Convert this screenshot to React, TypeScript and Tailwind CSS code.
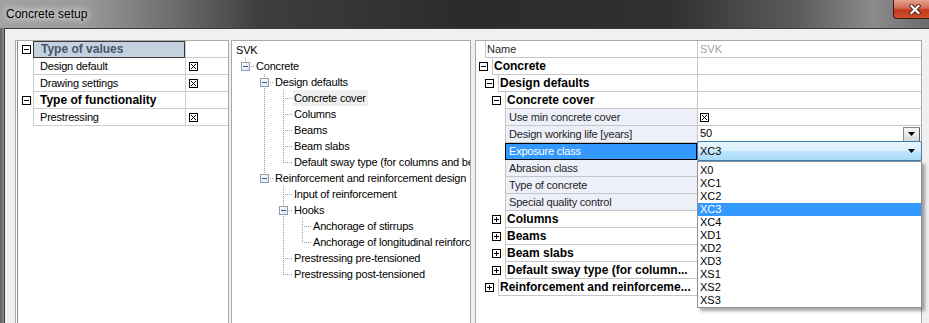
import type { ReactNode } from "react";

// small ⊠ glyph used in value columns
function Check() {
  const px = [2, 3, 4, 5, 6];
  return (
    <svg width="9" height="9" viewBox="0 0 9 9" shapeRendering="crispEdges" className="shrink-0">
      <rect x="0.5" y="0.5" width="8" height="8" fill="#fff" stroke="#000" />
      {px.map((i) => (
        <rect key={"a" + i} x={i} y={i} width="1" height="1" fill="#000" />
      ))}
      {px.map((i) => (
        <rect key={"b" + i} x={8 - i} y={i} width="1" height="1" fill="#000" />
      ))}
    </svg>
  );
}

function GridToggle({ open }: { open: boolean }) {
  return (
    <svg width="9" height="9" viewBox="0 0 9 9" shapeRendering="crispEdges" className="shrink-0">
      <rect x="0.5" y="0.5" width="8" height="8" fill="#fff" stroke="#000" />
      <rect x="2" y="4" width="5" height="1" fill="#000" />
      {!open && <rect x="4" y="2" width="1" height="5" fill="#000" />}
    </svg>
  );
}

function DownArrow() {
  return (
    <svg width="7" height="4" viewBox="0 0 7 4" className="shrink-0">
      <polygon points="0,0 7,0 3.5,4" fill="#000" />
    </svg>
  );
}

type Seg = "pipe" | "blank" | "tee" | "ell";

// dotted connector column of the tree view
function TreeGlyph({ seg, toggle }: { seg: Seg; toggle?: boolean }) {
  const dots: ReactNode[] = [];
  if (seg !== "blank") {
    const end = seg === "ell" ? 9 : 16;
    for (let y = 0; y < end; y += 2) dots.push(<rect key={"v" + y} x={9} y={y} width={1} height={1} />);
  }
  if (seg === "tee" || seg === "ell") {
    for (let x = 11; x < 19; x += 2) dots.push(<rect key={"h" + x} x={x} y={8} width={1} height={1} />);
  }
  return (
    <svg width="19" height="16" viewBox="0 0 19 16" shapeRendering="crispEdges" className="shrink-0">
      <defs>
        <linearGradient id="tgFill" x1="0" y1="0" x2="1" y2="1">
          <stop offset="0" stopColor="#ffffff" />
          <stop offset="1" stopColor="#dfe5ec" />
        </linearGradient>
      </defs>
      <g fill="#a0a0a0">{dots}</g>
      {toggle && (
        <g>
          <rect x="5.5" y="4.5" width="8" height="8" fill="url(#tgFill)" stroke="#8f9cae" />
          <rect x="7" y="8" width="5" height="1" fill="#2a56a3" />
        </g>
      )}
    </svg>
  );
}

const tree: { label: string; guides: Seg[]; seg: Seg; toggle?: boolean; selected?: boolean }[] = [
  { label: "Concrete", guides: [], seg: "ell", toggle: true },
  { label: "Design defaults", guides: ["blank"], seg: "tee", toggle: true },
  { label: "Concrete cover", guides: ["blank", "pipe"], seg: "tee", selected: true },
  { label: "Columns", guides: ["blank", "pipe"], seg: "tee" },
  { label: "Beams", guides: ["blank", "pipe"], seg: "tee" },
  { label: "Beam slabs", guides: ["blank", "pipe"], seg: "tee" },
  { label: "Default sway type (for columns and beams)", guides: ["blank", "pipe"], seg: "ell" },
  { label: "Reinforcement and reinforcement design", guides: ["blank"], seg: "ell", toggle: true },
  { label: "Input of reinforcement", guides: ["blank", "blank"], seg: "tee" },
  { label: "Hooks", guides: ["blank", "blank"], seg: "tee", toggle: true },
  { label: "Anchorage of stirrups", guides: ["blank", "blank", "pipe"], seg: "tee" },
  { label: "Anchorage of longitudinal reinforcement", guides: ["blank", "blank", "pipe"], seg: "ell" },
  { label: "Prestressing pre-tensioned", guides: ["blank", "blank"], seg: "tee" },
  { label: "Prestressing post-tensioned", guides: ["blank", "blank"], seg: "ell" },
];

const exposure = ["X0", "XC1", "XC2", "XC3", "XC4", "XD1", "XD2", "XD3", "XS1", "XS2", "XS3"];

function TitleBar() {
  return (
    <div className="h-[28px] shrink-0 flex items-start bg-[linear-gradient(90deg,#a2a2a2_0%,#9a9a9a_9%,#707070_18%,#3e3e3e_28%,#2b2b2b_50%,#303030_72%,#5c5c5c_86%,#8c8c8c_94%,#6a6a6a_100%)]">
      <span className="mt-[7px] ml-[6px] text-[12px] leading-[14px] text-black [text-shadow:0_0_6px_#fff,0_0_10px_rgba(255,255,255,0.8)]">
        Concrete setup
      </span>
      {/* close button */}
      <div className="ml-auto w-[36px] h-[19px] flex items-center justify-end pr-[8px] rounded-bl-[4px] border border-t-0 border-r-0 border-[#3f1a12] bg-[linear-gradient(180deg,#e7a08c_0%,#d26a4f_45%,#c13a1d_55%,#cf4f2c_100%)]">
        <svg width="12" height="11" viewBox="0 0 12 11">
          <path d="M2.5 2 L9.5 9 M9.5 2 L2.5 9" stroke="#4a1d14" strokeWidth="4" strokeLinecap="square" />
          <path d="M2.5 2 L9.5 9 M9.5 2 L2.5 9" stroke="#fff" strokeWidth="2.2" strokeLinecap="square" />
        </svg>
      </div>
    </div>
  );
}

function LeftPanel() {
  const line = "border-[#cdcdcd]";
  const rows = [
    { label: "Type of values", group: true, selected: true },
    { label: "Design default", check: true },
    { label: "Drawing settings", check: true },
    { label: "Type of functionality", group: true },
    { label: "Prestressing", check: true },
  ];
  return (
    <div className="w-[214px] h-[300px] shrink-0 border border-[#a9a9a9] bg-white pl-[1px]">
      <div className="border-l border-[#8a8a8a] h-full">
        {rows.map((r) => (
          <div key={r.label} className="flex h-[17px]">
            <div className="w-[15px] shrink-0 flex items-center justify-center pl-[1px]">
              {r.group && <GridToggle open />}
            </div>
            {r.selected ? (
              <div className="w-[152px] shrink-0 border border-[#3a3a3a] bg-[#c4d2e0] pl-[7px] text-[12px] font-bold leading-[15px] text-[#46566a]">
                {r.label}
              </div>
            ) : (
              <div
                className={`w-[152px] shrink-0 border-l border-b ${line} pl-[6px] ${
                  r.group ? "text-[12px] font-bold leading-[16px]" : "text-[11px] leading-[16px] tracking-[-0.2px]"
                }`}
              >
                {r.label}
              </div>
            )}
            <div className={`w-[43px] shrink-0 border-l border-b ${line} pl-[3px] flex items-center`}>
              {r.check && <Check />}
            </div>
          </div>
        ))}
      </div>
    </div>
  );
}

function MiddlePanel() {
  return (
    <div className="w-[240px] h-[300px] shrink-0 ml-[2px] border border-[#a9a9a9] bg-white overflow-hidden pt-[1px] pl-[4px] text-[11px] tracking-[-0.2px]">
      <div className="h-[16px] leading-[16px]">SVK</div>
      {tree.map((n) => (
        <div key={n.label} className="flex h-[16px] items-center whitespace-nowrap">
          {n.guides.map((g, i) => (
            <TreeGlyph key={i} seg={g} />
          ))}
          <TreeGlyph seg={n.seg} toggle={n.toggle} />
          <span className={`h-[16px] leading-[16px] pl-[1px] pr-[2px] ${n.selected ? "bg-[#efefef]" : ""}`}>{n.label}</span>
        </div>
      ))}
    </div>
  );
}

type PropRowProps = {
  indent: string;
  nameW: string;
  toggle?: "open" | "closed";
  children: ReactNode;
  bold?: boolean;
  leaf?: boolean;
  value?: ReactNode;
};

const gl = "border-[#c6c6c6]";

function PropRow({ indent, nameW, toggle, children, bold, leaf, value }: PropRowProps) {
  return (
    <div className="flex h-[17px]">
      <div className={`${indent} shrink-0 flex items-center justify-end pr-[4px]`}>
        {toggle && <GridToggle open={toggle === "open"} />}
      </div>
      <div
        className={`${nameW} shrink-0 border-l border-b ${gl} overflow-hidden whitespace-nowrap ${
          bold ? "pl-[1px] text-[12px] font-bold leading-[16px] text-black" : ""
        } ${leaf ? "pl-[3px] bg-[#eef0f9] text-[11px] leading-[16px] tracking-[-0.2px] text-[#1e1e1e]" : ""}`}
      >
        {children}
      </div>
      <div className={`w-[224px] shrink-0 border-l border-b ${gl} flex items-center`}>{value}</div>
    </div>
  );
}

function RightPanel() {
  return (
    <div className="w-[447px] h-[300px] shrink-0 ml-[4px] border border-[#a9a9a9] bg-white text-[11px]">
      {/* header */}
      <div className="flex h-[17px]">
        <div className="w-[9px] shrink-0" />
        <div className={`w-[212px] shrink-0 border-l border-b ${gl} pl-[1px] leading-[16px] text-[#2a2a2a]`}>Name</div>
        <div className={`w-[224px] shrink-0 border-l border-b ${gl} pl-[2px] leading-[16px] text-[#a3a3a3]`}>SVK</div>
      </div>
      <PropRow indent="w-[16px]" nameW="w-[205px]" toggle="open" bold>
        Concrete
      </PropRow>
      <PropRow indent="w-[22px]" nameW="w-[199px]" toggle="open" bold>
        Design defaults
      </PropRow>
      <PropRow indent="w-[29px]" nameW="w-[192px]" toggle="open" bold>
        Concrete cover
      </PropRow>
      <PropRow
        indent="w-[29px]"
        nameW="w-[192px]"
        leaf
        value={
          <div className="pl-[2px]">
            <Check />
          </div>
        }
      >
        Use min concrete cover
      </PropRow>
      <PropRow
        indent="w-[29px]"
        nameW="w-[192px]"
        leaf
        value={
          <div className="flex-1 h-full flex items-center justify-between pl-[2px] pr-[1px] pb-[1px]">
            <span className="leading-[15px]">50</span>
            <div className="w-[17px] h-[15px] mt-[1px] flex items-center justify-center border border-[#8a8a8a] border-r-[#5a5a5a] border-b-[#5a5a5a] bg-[linear-gradient(180deg,#f7f7f7_0%,#e9e9e9_50%,#d8d8d8_100%)]">
              <DownArrow />
            </div>
          </div>
        }
      >
        Design working life [years]
      </PropRow>
      {/* selected row with open combo */}
      <div className="flex h-[17px]">
        <div className="w-[29px] shrink-0" />
        <div className="w-[192px] shrink-0 border border-black bg-[#3399ff] pl-[3px] text-[11px] leading-[15px] tracking-[-0.2px] text-white">
          Exposure class
        </div>
        <div className={`w-[224px] shrink-0 border-l border-b ${gl} relative`}>
          <div className="absolute left-[-1px] right-[-1px] top-[-2px] h-[20px] z-10 flex items-center justify-between pl-[2px] pr-[6px] border border-[#3c7fb1] rounded-[2px] bg-[linear-gradient(180deg,#eaf6fd_0%,#d9f0fc_48%,#bee6fd_52%,#a7d9f5_100%)]">
            <span className="leading-[15px]">XC3</span>
            <DownArrow />
          </div>
          <div className="absolute left-[-1px] top-[18px] w-[225px] z-20 border border-[#8e8f8f] bg-white pt-[2px] shadow-[3px_3px_3px_rgba(0,0,0,0.35)]">
            {exposure.map((x) => (
              <div
                key={x}
                className={`h-[13px] leading-[13px] pl-[2px] text-[11px] ${x === "XC3" ? "bg-[#3399ff] text-white" : "text-black"}`}
              >
                {x}
              </div>
            ))}
          </div>
        </div>
      </div>
      <PropRow indent="w-[29px]" nameW="w-[192px]" leaf>
        Abrasion class
      </PropRow>
      <PropRow indent="w-[29px]" nameW="w-[192px]" leaf>
        Type of concrete
      </PropRow>
      <PropRow indent="w-[29px]" nameW="w-[192px]" leaf>
        Special quality control
      </PropRow>
      <PropRow indent="w-[29px]" nameW="w-[192px]" toggle="closed" bold>
        Columns
      </PropRow>
      <PropRow indent="w-[29px]" nameW="w-[192px]" toggle="closed" bold>
        Beams
      </PropRow>
      <PropRow indent="w-[29px]" nameW="w-[192px]" toggle="closed" bold>
        Beam slabs
      </PropRow>
      <PropRow indent="w-[29px]" nameW="w-[192px]" toggle="closed" bold>
        Default sway type (for column...
      </PropRow>
      <PropRow indent="w-[22px]" nameW="w-[199px]" toggle="closed" bold>
        Reinforcement and reinforceme...
      </PropRow>
    </div>
  );
}

export default function App() {
  return (
    <div className="w-[929px] h-[323px] overflow-hidden flex flex-col bg-[#f0f0f0] font-['Liberation_Sans',Arial,sans-serif] text-black select-none">
      <TitleBar />
      <div className="flex flex-1 min-h-0">
        {/* window frame */}
        <div className="w-[4px] shrink-0 bg-[linear-gradient(90deg,#5e5e5e,#8d8d8d)]" />
        <div className="flex-1 flex items-start border-l border-t border-[#3b3b3b] pt-[11px] pl-[10px]">
          <LeftPanel />
          <MiddlePanel />
          <RightPanel />
        </div>
      </div>
    </div>
  );
}
